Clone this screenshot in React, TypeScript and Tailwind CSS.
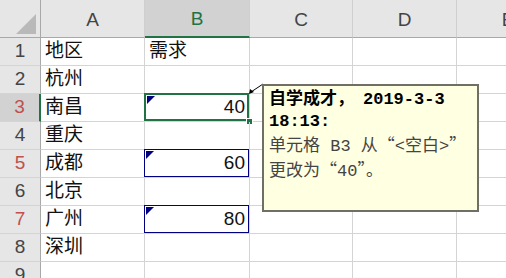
import React from "react";

const rows: [string, string][] = [
  ["地区", "需求"],
  ["杭州", ""],
  ["南昌", "40"],
  ["重庆", ""],
  ["成都", "60"],
  ["北京", ""],
  ["广州", "80"],
  ["深圳", ""],
  ["", ""],
];

const changed = [3, 5, 7];

const cjk = { fontFamily: '"Noto Sans CJK SC", sans-serif' };

export default function App() {
  return (
    <div
      className="relative w-[506px] h-[278px] overflow-hidden bg-white text-[#111]"
      style={{ fontFamily: '"Liberation Sans", "Noto Sans CJK SC", sans-serif' }}
    >
      <div className="grid w-[560px] grid-cols-[41px_104px_105px_103px_104px_103px] grid-rows-[38px_repeat(9,28px)]">
        {/* 表头 */}
        <div className="relative bg-[#e6e6e6] border-r border-b border-[#a8a8a8]">
          <div className="absolute left-[16px] top-[14px] w-0 h-0 border-l-[20px] border-l-transparent border-b-[20px] border-b-[#b9b9b9]" />
        </div>
        {["A", "B", "C", "D", "E"].map((c) => (
          <div
            key={c}
            className={`flex items-end justify-center pb-[3px] text-[19px] border-r border-r-[#cfcfcf] ${
              c === "B"
                ? "bg-[#d2d2d2] text-[#217346] border-b-2 border-b-[#217346]"
                : "bg-[#e6e6e6] text-[#444] border-b border-b-[#a8a8a8]"
            }`}
          >
            {c}
          </div>
        ))}

        {rows.map(([a, b], i) => {
          const n = i + 1;
          const isRed = changed.includes(n);
          const isNum = /^\d+$/.test(b);
          return (
            <React.Fragment key={n}>
              <div
                className={`flex items-center justify-center text-[19px] border-b border-b-[#d4d4d4] ${
                  n === 3
                    ? "bg-[#d2d2d2] border-r-2 border-r-[#217346]"
                    : "bg-[#e6e6e6] border-r border-r-[#a8a8a8]"
                } ${isRed ? "text-[#c0504d]" : "text-[#444]"}`}
              >
                {n}
              </div>
              <div className="flex items-center pl-[4px] text-[19px] border-r border-b border-[#d4d4d4]">
                {a}
              </div>
              <div
                className={`relative flex items-center text-[19px] border-r border-b border-[#d4d4d4] ${
                  isNum ? "justify-end pr-[4px]" : "justify-start pl-[4px]"
                }`}
              >
                {b}
                {isRed && (
                  <div
                    className={`absolute -left-px -top-px right-0 bottom-0 ${
                      n === 3 ? "border-2 border-[#217346]" : "border border-[#000080]"
                    }`}
                  >
                    <div className="absolute left-[1px] top-[1px] w-0 h-0 border-t-[8px] border-t-[#000080] border-r-[8px] border-r-transparent" />
                  </div>
                )}
                {n === 3 && (
                  <div className="absolute right-[-4px] bottom-[-4px] w-[7px] h-[7px] bg-[#217346] border border-white" />
                )}
              </div>
              <div className="border-r border-b border-[#d4d4d4]" />
              <div className="border-r border-b border-[#d4d4d4]" />
              <div className="border-r border-b border-[#d4d4d4]" />
            </React.Fragment>
          );
        })}
      </div>

      {/* 批注指示线 */}
      <svg className="absolute left-[244px] top-[80px]" width="24" height="20" viewBox="0 0 24 20">
        <line x1="19" y1="4" x2="7" y2="12" stroke="#000" strokeWidth="1" />
        <polygon points="5,14 6,9 10,12" fill="#000" />
      </svg>

      {/* 批注框 */}
      <div
        className="absolute left-[262px] top-[84px] w-[217px] h-[128px] bg-[#ffffe1] border-2 border-[#6f6f66] pl-[5px] pt-[3px] text-[17px] leading-[22px] text-[#444]"
        style={{ fontFamily: '"Liberation Mono", "Noto Sans CJK SC", monospace' }}
      >
        <div className="font-bold text-black">
          自学成才，<span className="ml-[9px]">2019-3-3</span>
        </div>
        <div className="font-bold text-black">18:13:</div>
        <div>
          单元格 B3 从<span style={cjk}>“</span>&lt;<span style={cjk}>空白</span>&gt;<span style={cjk}>”</span>
        </div>
        <div>
          更改为<span style={cjk}>“</span>40<span style={cjk}>”。</span>
        </div>
      </div>
    </div>
  );
}
